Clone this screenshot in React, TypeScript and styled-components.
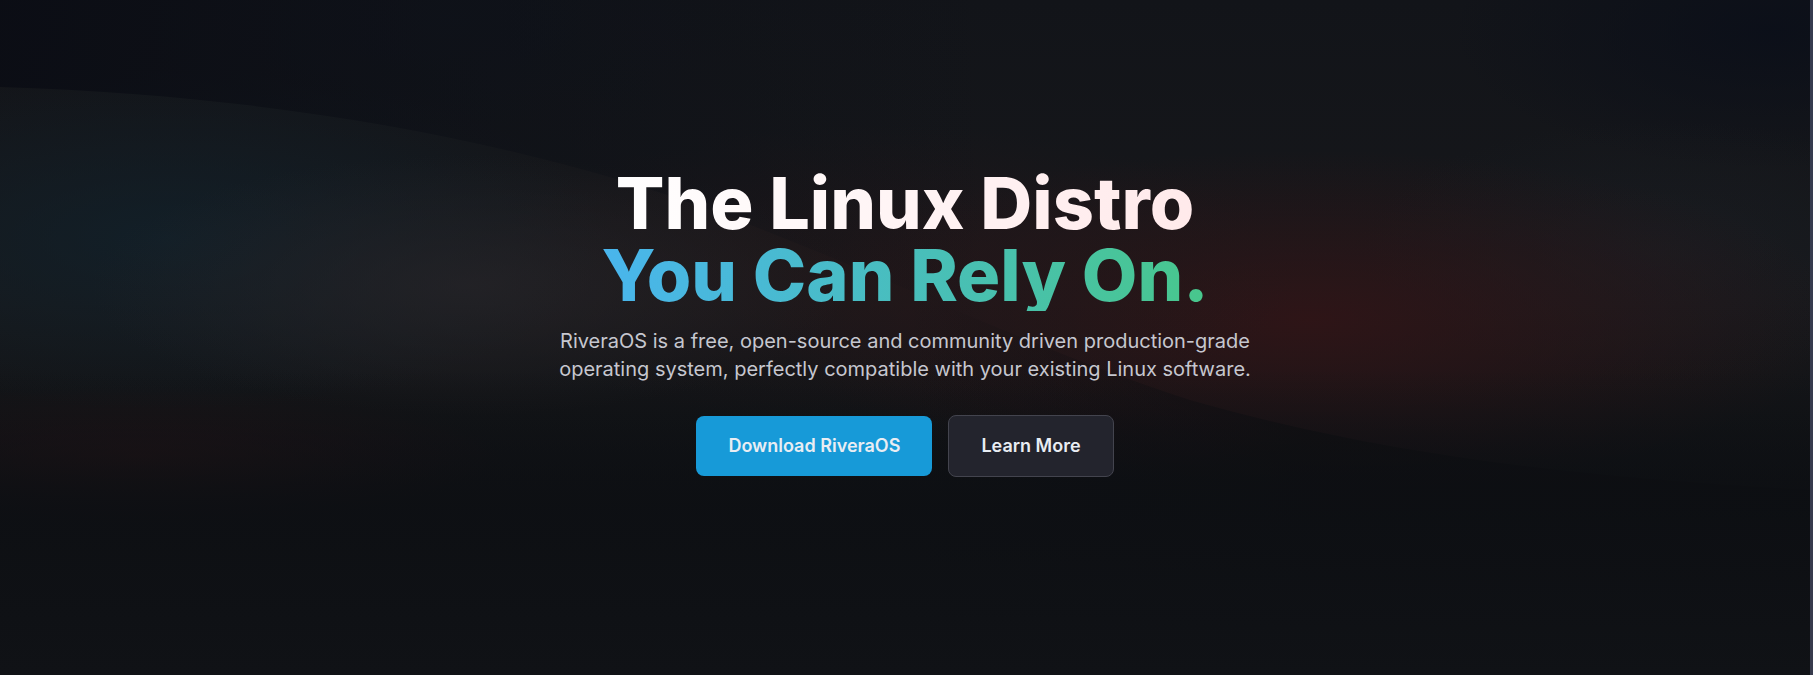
import React from "react";
import styled, { createGlobalStyle } from "styled-components";

const GlobalStyle = createGlobalStyle`
  html, body {
    margin: 0;
    padding: 0;
    background: #0f1115;
  }
  body {
    font-family: Inter, "Noto Sans", "Liberation Sans", sans-serif;
    -webkit-font-smoothing: antialiased;
  }
  * { box-sizing: border-box; }
`;

const Page = styled.div`
  display: flex;
  width: 100%;
  height: 675px;
  overflow: hidden;
`;

const Hero = styled.section`
  position: relative;
  flex: 1;
  height: 100%;
  overflow: hidden;
  background:
    radial-gradient(ellipse 380px 130px at 470px 285px, rgba(38, 36, 40, 0.75), transparent),
    radial-gradient(ellipse 440px 170px at 170px 240px, rgba(17, 33, 43, 0.8), transparent),
    radial-gradient(ellipse 420px 150px at 880px 275px, rgba(36, 23, 25, 0.7), transparent),
    radial-gradient(ellipse 540px 170px at 1310px 320px, rgba(52, 20, 22, 0.8), transparent),
    radial-gradient(ellipse 300px 130px at 1660px 250px, rgba(26, 30, 36, 0.6), transparent),
    radial-gradient(ellipse 360px 70px at 140px 455px, rgba(38, 20, 23, 0.7), transparent),
    radial-gradient(ellipse 320px 140px at 1770px 30px, rgba(11, 15, 25, 0.9), transparent),
    radial-gradient(ellipse 260px 110px at 450px 20px, rgba(17, 21, 29, 0.7), transparent),
    linear-gradient(180deg, #121419 0%, #17181b 45%, #0f1114 72%, #101216 100%);
`;

const Backdrop = styled.svg`
  position: absolute;
  inset: 0;
  width: 100%;
  height: 100%;
  z-index: 0;
`;

const Content = styled.div`
  position: relative;
  z-index: 1;
  display: flex;
  flex-direction: column;
  align-items: center;
  padding-top: 167px;
  text-align: center;
`;

const Title = styled.h1`
  margin: 0;
  font-family: Inter, "Noto Sans", sans-serif;
  font-weight: 800;
  font-size: 72px;
  line-height: 72px;
  letter-spacing: 0;
`;

const TitleLine = styled.span<{ $from: string; $to: string }>`
  display: block;
  background: linear-gradient(90deg, ${(p) => p.$from}, ${(p) => p.$to});
  -webkit-background-clip: text;
  background-clip: text;
  color: transparent;
  padding: 0 4px;
`;

const Lead = styled.p`
  margin: 16px 0 0;
  max-width: 760px;
  font-size: 20px;
  line-height: 28px;
  font-weight: 400;
  color: #c6c7cf;
`;

const Actions = styled.div`
  display: flex;
  align-items: center;
  gap: 16px;
  margin-top: 32px;
`;

const Button = styled.a<{ $variant: "primary" | "secondary" }>`
  display: inline-flex;
  align-items: center;
  justify-content: center;
  padding: 16px 32px;
  border-radius: 8px;
  font-size: 18px;
  line-height: 28px;
  font-weight: 600;
  text-decoration: none;
  cursor: pointer;
  color: #e9edf3;
  background: ${(p) => (p.$variant === "primary" ? "#179ad8" : "#23242d")};
  border: ${(p) => (p.$variant === "primary" ? "none" : "1px solid #43444e")};
`;

const EdgeBar = styled.div`
  width: 3px;
  height: 100%;
  background: linear-gradient(180deg, #363c50, #383b4d);
`;

const CURVE =
  "M0,87 C250,95 450,130 620,180 C820,240 1000,340 1190,400 C1400,460 1600,478 1810,490";

function Background() {
  return (
    <Backdrop viewBox="0 0 1810 675" preserveAspectRatio="none" aria-hidden="true">
      <defs>
        <linearGradient id="aboveFade" x1="0" y1="0" x2="1" y2="0">
          <stop offset="0" stopColor="#0a0c14" stopOpacity="0.85" />
          <stop offset="0.3" stopColor="#0c0f16" stopOpacity="0.45" />
          <stop offset="0.55" stopColor="#0c0f16" stopOpacity="0" />
          <stop offset="1" stopColor="#0c0f16" stopOpacity="0" />
        </linearGradient>
        <linearGradient id="belowFade" x1="0" y1="0" x2="1" y2="0">
          <stop offset="0" stopColor="#0d0f12" stopOpacity="0" />
          <stop offset="0.5" stopColor="#0d0f12" stopOpacity="0" />
          <stop offset="0.72" stopColor="#0c0d10" stopOpacity="0.6" />
          <stop offset="1" stopColor="#0c0d10" stopOpacity="0.75" />
        </linearGradient>
        <linearGradient id="bottomFade" x1="0" y1="0" x2="0" y2="1">
          <stop offset="0" stopColor="#0d0f13" stopOpacity="0" />
          <stop offset="0.45" stopColor="#0d0f13" stopOpacity="0.8" />
          <stop offset="1" stopColor="#101216" stopOpacity="1" />
        </linearGradient>
      </defs>
      <path d={`${CURVE} L1810,0 L0,0 Z`} fill="url(#aboveFade)" />
      <path d={`${CURVE} L1810,675 L0,675 Z`} fill="url(#belowFade)" />
      <rect x="0" y="370" width="1810" height="305" fill="url(#bottomFade)" />
    </Backdrop>
  );
}

export default function App() {
  return (
    <>
      <GlobalStyle />
      <Page>
        <Hero>
          <Background />
          <Content>
            <Title>
              <TitleLine $from="#ffffff" $to="#ffe9ea">
                The Linux Distro
              </TitleLine>
              <TitleLine $from="#49b5ee" $to="#48c78b">
                You Can Rely On.
              </TitleLine>
            </Title>
            <Lead>
              RiveraOS is a free, open-source and community driven production-grade
              operating system, perfectly compatible with your existing Linux software.
            </Lead>
            <Actions>
              <Button $variant="primary">Download RiveraOS</Button>
              <Button $variant="secondary">Learn More</Button>
            </Actions>
          </Content>
        </Hero>
        <EdgeBar />
      </Page>
    </>
  );
}
